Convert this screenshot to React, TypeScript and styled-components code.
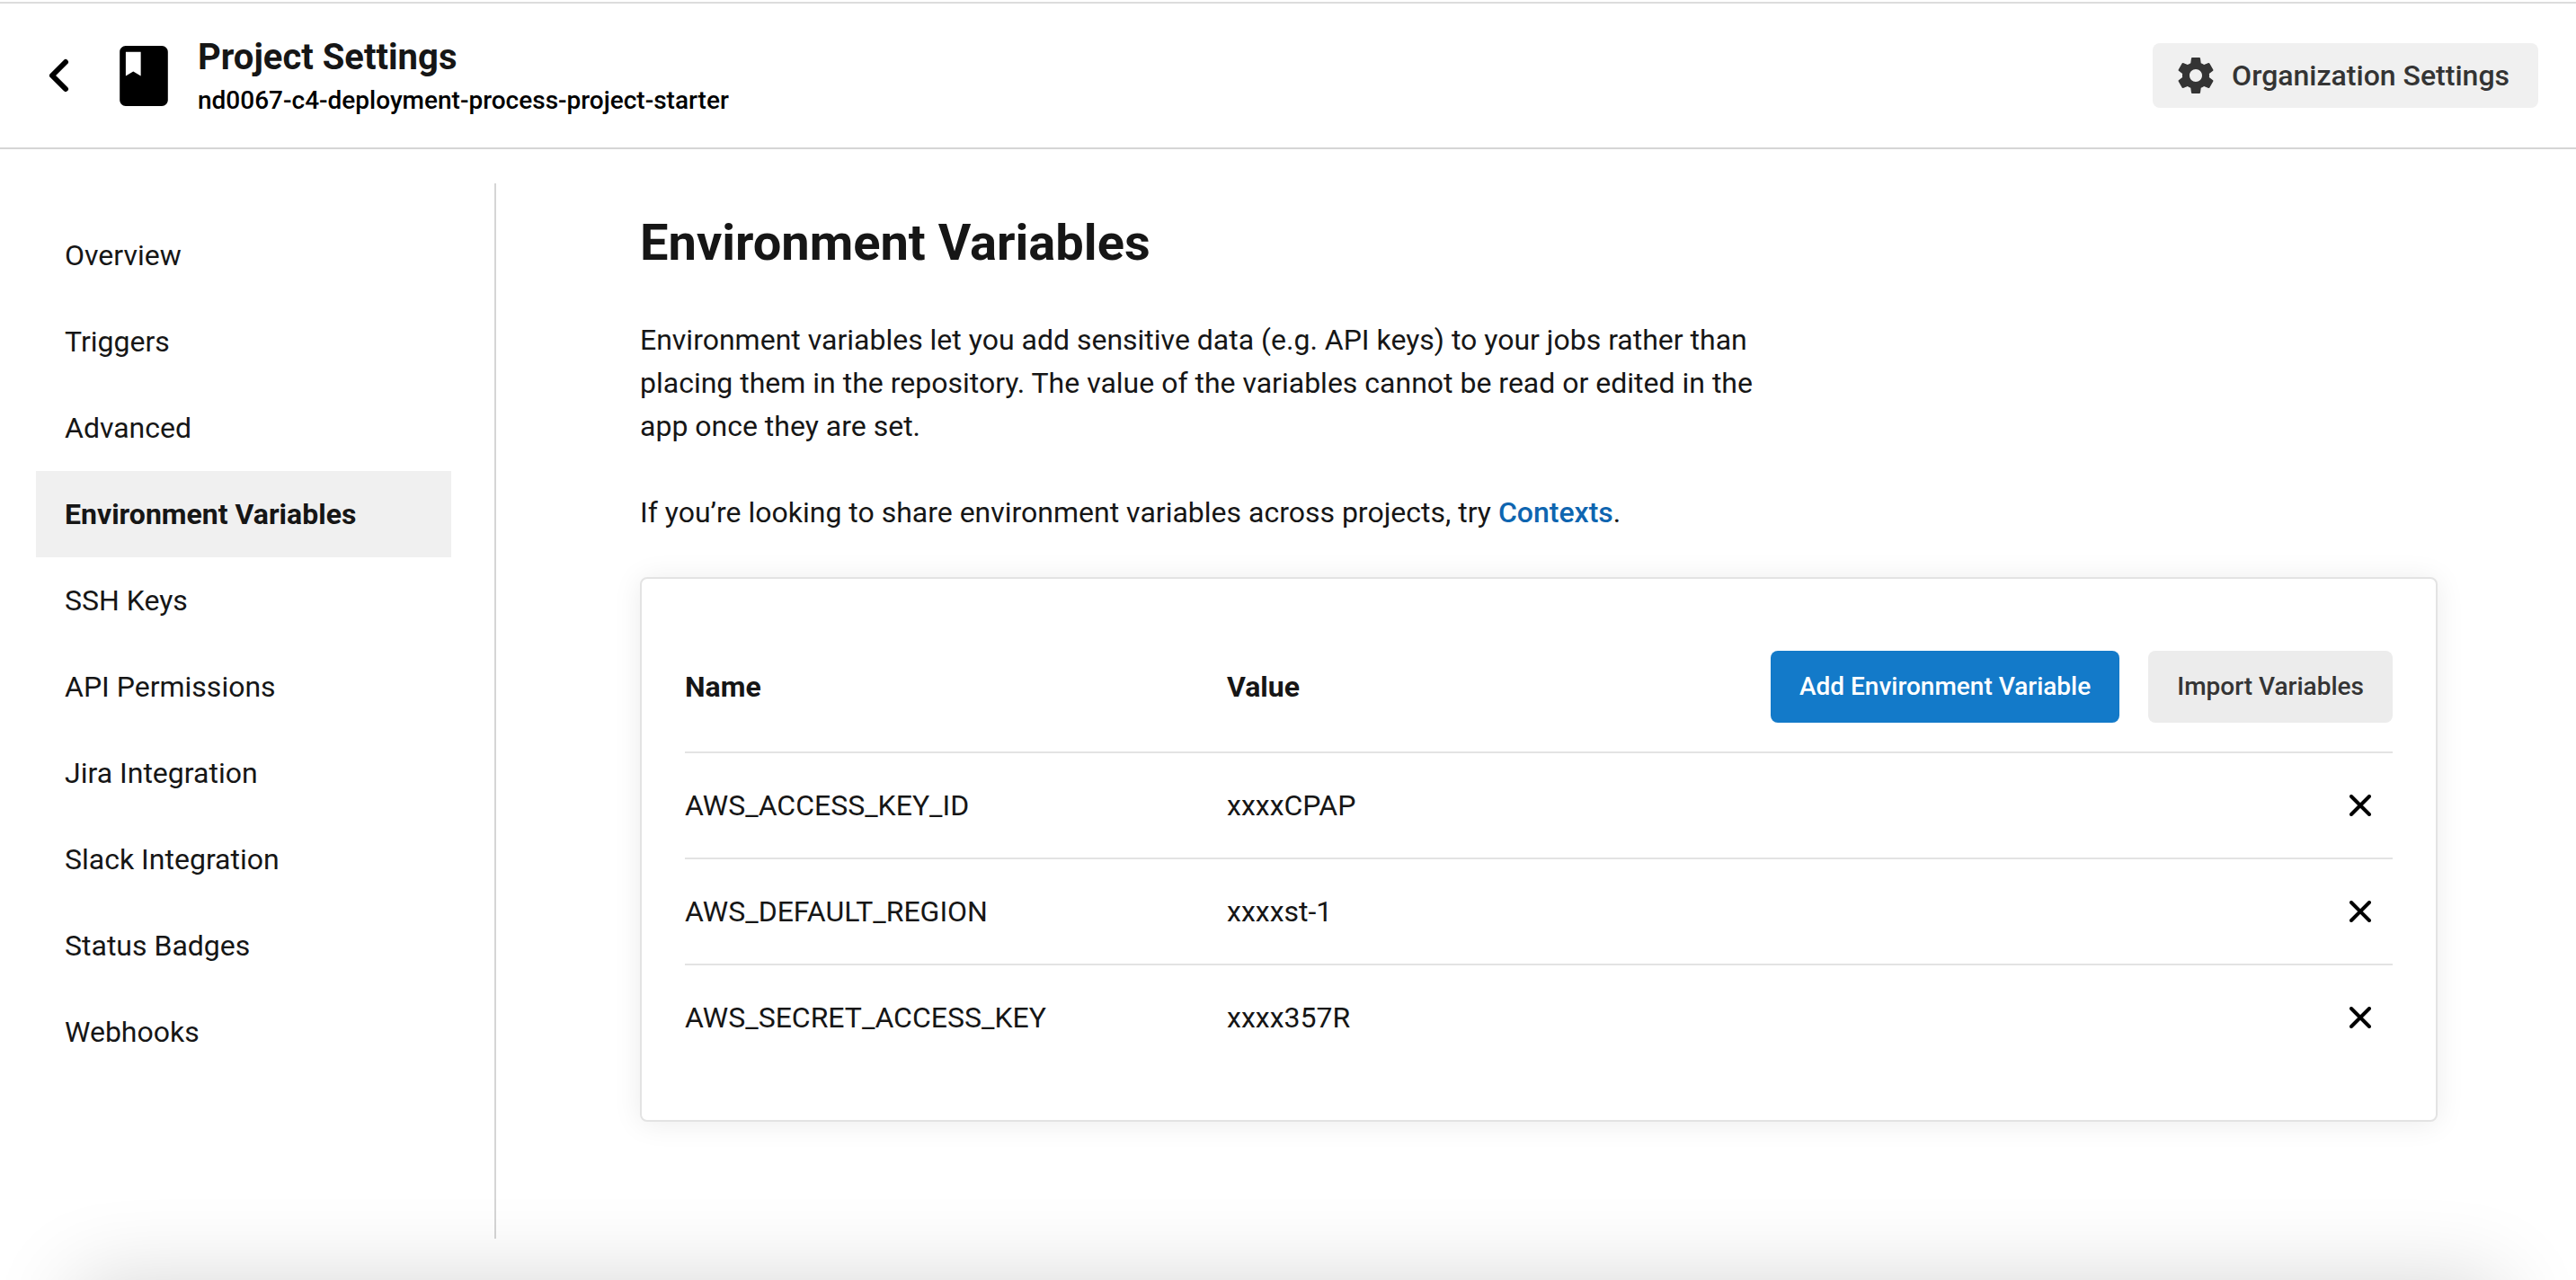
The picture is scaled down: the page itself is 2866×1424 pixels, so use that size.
import React from "react";
import styled, { createGlobalStyle } from "styled-components";

const GlobalStyle = createGlobalStyle`
  *, *::before, *::after { box-sizing: border-box; }
  body {
    margin: 0;
    background: #fff;
    color: #161616;
    font-family: Roboto, "Liberation Sans", sans-serif;
    font-size: 32px;
    line-height: 48px;
  }
`;

const Page = styled.div`
  display: flex;
  flex-direction: column;
  min-height: 100vh;
  padding-top: 2px;
  overflow: hidden;
`;

const Header = styled.header`
  display: flex;
  align-items: center;
  justify-content: space-between;
  min-height: 164px;
  padding: 0 42px;
  border-top: 2px solid #dcdcdc;
  border-bottom: 2px solid #d5d5d5;
`;

const HeaderStart = styled.div`
  display: flex;
  align-items: center;
`;

const IconButton = styled.button`
  display: flex;
  align-items: center;
  justify-content: center;
  width: 48px;
  height: 48px;
  padding: 0;
  border: 0;
  background: transparent;
  color: #000;
  cursor: pointer;
`;

const BookIcon = styled.svg`
  width: 54px;
  height: 67px;
  margin: 0 33px 0 43px;
`;

const TitleGroup = styled.div`
  display: flex;
  flex-direction: column;
  gap: 2px;
  padding-top: 6px;
`;

const Title = styled.div`
  font-size: 40px;
  font-weight: 700;
  line-height: 48px;
`;

const Subtitle = styled.div`
  color: #000;
  font-size: 28px;
  font-weight: 500;
  line-height: 44px;
`;

const OrgButton = styled.button`
  display: inline-flex;
  align-items: center;
  gap: 16px;
  height: 72px;
  padding: 0 32px 0 24px;
  border: 0;
  border-radius: 8px;
  background: #f0f0f0;
  color: #343434;
  font: 500 32px/48px Roboto, "Liberation Sans", sans-serif;
  cursor: pointer;
`;

const Body = styled.div`
  display: flex;
  flex: 1;
`;

const Sidebar = styled.nav`
  flex: 0 0 552px;
  margin: 38px 0 46px;
  padding: 32px 48px 32px 40px;
  border-right: 2px solid #d5d5d5;
`;

const NavItem = styled.a<{ $active?: boolean }>`
  display: block;
  padding: 24px 32px;
  background: ${(p) => (p.$active ? "#f0f0f0" : "transparent")};
  color: #161616;
  font-weight: ${(p) => (p.$active ? 700 : 400)};
  text-decoration: none;
`;

const Main = styled.main`
  flex: 1;
  min-width: 0;
  max-width: 2160px;
  padding: 68px 0 48px 160px;
`;

const Heading = styled.h1`
  margin: 0 0 48px;
  font-size: 56px;
  font-weight: 700;
  line-height: 72px;
`;

const Paragraph = styled.p`
  max-width: 1248px;
  margin: 0 0 48px;
`;

const TextLink = styled.a`
  color: #0e65b0;
  font-weight: 500;
  text-decoration: none;
`;

const Card = styled.section`
  padding: 80px 48px 56px;
  border: 2px solid #e3e3e3;
  border-radius: 8px;
  background: #fff;
  box-shadow: 0 2px 32px rgba(0, 0, 0, 0.08);
`;

const Table = styled.table`
  width: 100%;
  border-collapse: separate;
  border-spacing: 0;
  table-layout: fixed;
  text-align: left;
`;

const NameCol = styled.col`
  width: 603px;
`;

const HeadCell = styled.th`
  height: 112px;
  padding: 0 0 32px;
  font-weight: 700;
`;

const Cell = styled.td<{ $end?: boolean }>`
  height: 118px;
  padding: 0 ${(p) => (p.$end ? "12px" : "0")} 0 0;
  border-top: 2px solid #e3e3e3;
  ${IconButton} { margin-left: auto; }
`;

const Actions = styled.div`
  display: flex;
  justify-content: flex-end;
  gap: 32px;
`;

const ActionButton = styled.button<{ $primary?: boolean }>`
  height: 80px;
  padding: 0 32px;
  border: 0;
  border-radius: 8px;
  background: ${(p) => (p.$primary ? "#137ac9" : "#ececec")};
  color: ${(p) => (p.$primary ? "#fff" : "#343434")};
  font: 500 28px/40px Roboto, "Liberation Sans", sans-serif;
  white-space: nowrap;
  cursor: pointer;
`;

const BottomShade = styled.div`
  position: fixed;
  top: 100%;
  left: 84px;
  right: 84px;
  height: 200px;
  box-shadow: 0 0 96px rgba(0, 0, 0, 0.16);
  pointer-events: none;
`;

const navItems = [
  "Overview",
  "Triggers",
  "Advanced",
  "Environment Variables",
  "SSH Keys",
  "API Permissions",
  "Jira Integration",
  "Slack Integration",
  "Status Badges",
  "Webhooks",
];

const variables = [
  { name: "AWS_ACCESS_KEY_ID", value: "xxxxCPAP" },
  { name: "AWS_DEFAULT_REGION", value: "xxxxst-1" },
  { name: "AWS_SECRET_ACCESS_KEY", value: "xxxx357R" },
];

const BackIcon = () => (
  <svg width="48" height="48" viewBox="0 0 48 48" fill="none" stroke="currentColor" strokeWidth="6" strokeLinecap="round" strokeLinejoin="round" aria-hidden="true">
    <path d="M31 9L16 24L31 39" />
  </svg>
);

const CloseIcon = () => (
  <svg width="24" height="24" viewBox="0 0 24 24" fill="none" stroke="currentColor" strokeWidth="4" strokeLinecap="round" aria-hidden="true">
    <path d="M2 2L22 22M22 2L2 22" />
  </svg>
);

const GearIcon = () => (
  <svg width="48" height="48" viewBox="0 0 24 24" fill="currentColor" aria-hidden="true">
    <path d="M19.43 12.98c.04-.32.07-.64.07-.98s-.03-.66-.07-.98l2.11-1.65c.19-.15.24-.42.12-.64l-2-3.46c-.12-.22-.39-.3-.61-.22l-2.49 1c-.52-.4-1.08-.73-1.69-.98l-.38-2.65C14.46 2.18 14.25 2 14 2h-4c-.25 0-.46.18-.49.42l-.38 2.65c-.61.25-1.17.59-1.69.98l-2.49-1c-.23-.09-.49 0-.61.22l-2 3.46c-.13.22-.07.49.12.64l2.11 1.65c-.04.32-.07.65-.07.98s.03.66.07.98l-2.11 1.65c-.19.15-.24.42-.12.64l2 3.46c.12.22.39.3.61.22l2.49-1c.52.4 1.08.73 1.69.98l.38 2.65c.03.24.24.42.49.42h4c.25 0 .46-.18.49-.42l.38-2.65c.61-.25 1.17-.59 1.69-.98l2.49 1c.23.09.49 0 .61-.22l2-3.46c.12-.22.07-.49-.12-.64l-2.11-1.65zM12 15.500c-1.930 0-3.500-1.570-3.500-3.500s1.570-3.500 3.500-3.500 3.500 1.570 3.500 3.500-1.570 3.500-3.500 3.500z" />
  </svg>
);

export default function App() {
  return (
    <>
      <GlobalStyle />
      <Page>
        <Header>
          <HeaderStart>
            <IconButton type="button" aria-label="Back">
              <BackIcon />
            </IconButton>
            <BookIcon viewBox="4 2 16 20" aria-hidden="true">
              <path d="M18 2H6c-1.100 0-2 .9-2 2v16c0 1.100.9 2 2 2h12c1.100 0 2-.9 2-2V4c0-1.100-.9-2-2-2zM6 4h5v8l-2.500-1.500L6 12V4z" />
            </BookIcon>
            <TitleGroup>
              <Title>Project Settings</Title>
              <Subtitle>nd0067-c4-deployment-process-project-starter</Subtitle>
            </TitleGroup>
          </HeaderStart>
          <OrgButton type="button">
            <GearIcon />
            Organization Settings
          </OrgButton>
        </Header>
        <Body>
          <Sidebar aria-label="Project settings">
            {navItems.map((item) => {
              const active = item === "Environment Variables";
              return (
                <NavItem key={item} href="#" $active={active} aria-current={active ? "page" : undefined}>
                  {item}
                </NavItem>
              );
            })}
          </Sidebar>
          <Main>
            <Heading>Environment Variables</Heading>
            <Paragraph>
              Environment variables let you add sensitive data (e.g. API keys) to your jobs rather than placing them in
              the repository. The value of the variables cannot be read or edited in the app once they are set.
            </Paragraph>
            <Paragraph>
              If you’re looking to share environment variables across projects, try <TextLink href="#">Contexts</TextLink>.
            </Paragraph>
            <Card>
              <Table>
                <colgroup>
                  <NameCol />
                  <col />
                  <col />
                </colgroup>
                <thead>
                  <tr>
                    <HeadCell scope="col">Name</HeadCell>
                    <HeadCell scope="col">Value</HeadCell>
                    <HeadCell>
                      <Actions>
                        <ActionButton type="button" $primary>
                          Add Environment Variable
                        </ActionButton>
                        <ActionButton type="button">Import Variables</ActionButton>
                      </Actions>
                    </HeadCell>
                  </tr>
                </thead>
                <tbody>
                  {variables.map((v) => (
                    <tr key={v.name}>
                      <Cell>{v.name}</Cell>
                      <Cell>{v.value}</Cell>
                      <Cell $end>
                        <IconButton type="button" aria-label={`Delete ${v.name}`}>
                          <CloseIcon />
                        </IconButton>
                      </Cell>
                    </tr>
                  ))}
                </tbody>
              </Table>
            </Card>
          </Main>
        </Body>
      </Page>
      <BottomShade />
    </>
  );
}
